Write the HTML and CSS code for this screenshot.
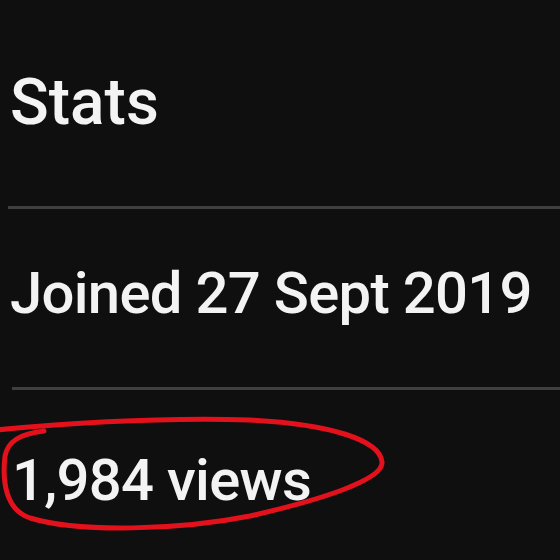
FILE: index.html
```html
<!DOCTYPE html>
<html>
<head>
<meta charset="utf-8">
<link rel="stylesheet" href="styles.css">
</head>
<body>
<main class="stats">
  <h2 class="title">Stats</h2>
  <hr class="rule rule-first">
  <p class="row row-joined">Joined 27 Sept 2019</p>
  <hr class="rule rule-second">
  <p class="row row-views">1,984 views</p>
</main>
<svg class="scribble" width="560" height="560" viewBox="0 0 560 560">
  <path d="M -4 430 C 60 424, 150 417, 250 420 C 330 424, 380 440, 382 462 C 384 480, 320 500, 250 516 C 180 530, 80 533, 30 518 C 6 510, 2 482, 5 456 C 8 441, 20 434, 44 431" fill="none" stroke="#e3111b" stroke-width="5" stroke-linecap="round"/>
</svg>
</body>
</html>
```
FILE: styles.css
```css
html, body {
  margin: 0;
  padding: 0;
  background: #0f0f0f;
  width: 560px;
  height: 560px;
  overflow: hidden;
}
.stats {
  display: flex;
  flex-direction: column;
  padding: 71px 0 0 10px;
  font-family: Roboto, "Noto Sans", sans-serif;
  color: #f3f3f3;
}
.title {
  margin: 0;
  font-size: 64px;
  line-height: 64px;
  font-weight: 500;
  letter-spacing: 0;
  white-space: nowrap;
}
.row {
  margin: 0;
  font-size: 58px;
  line-height: 58px;
  font-weight: 500;
  letter-spacing: -0.7px;
  white-space: nowrap;
}
.rule {
  margin: 0 0 0 -2px;
  border: 0;
  height: 3px;
  background: #3f3f3f;
}
.rule-first { margin-top: 71px; }
.row-joined { margin-top: 55px; }
.rule-second { margin-top: 65px; margin-left: 2px; }
.row-views { margin-top: 61px; margin-left: 2px; }
.scribble {
  position: absolute;
  left: 0;
  top: 0;
  pointer-events: none;
}
```
